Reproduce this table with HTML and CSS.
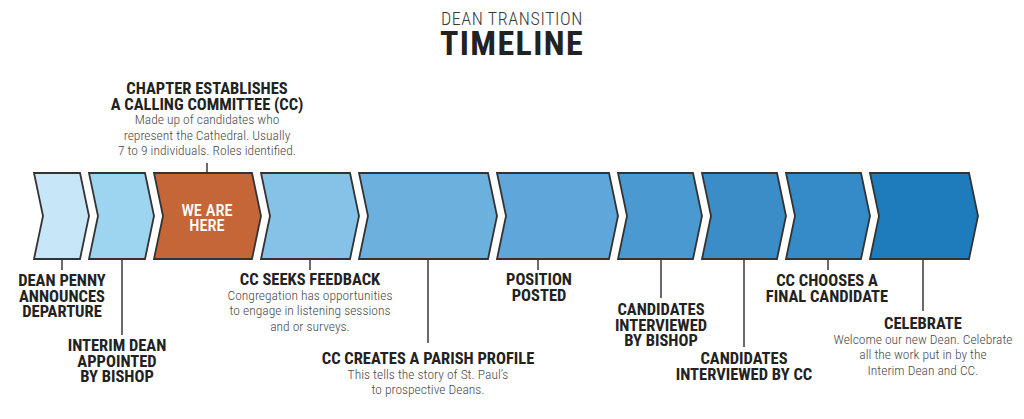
FILE: index.html
```html
<!DOCTYPE html>
<html lang="en">
<head>
<meta charset="utf-8">
<title>Dean Transition Timeline</title>
<link rel="stylesheet" href="styles.css">
</head>
<body>
<div class="page">
  <header class="header">
    <div class="kicker">DEAN TRANSITION</div>
    <h1 class="headline">TIMELINE</h1>
  </header>

  <svg class="canvas" width="1024" height="419" viewBox="0 0 1024 419" aria-hidden="true">
    <g class="links">
      <line x1="207" y1="163" x2="207" y2="174"/>
      <line x1="62" y1="258" x2="62" y2="270"/>
      <line x1="122" y1="258" x2="122" y2="335"/>
      <line x1="310" y1="258" x2="310" y2="270"/>
      <line x1="428" y1="258" x2="428" y2="343"/>
      <line x1="538" y1="258" x2="538" y2="270"/>
      <line x1="661" y1="258" x2="661" y2="298"/>
      <line x1="744" y1="258" x2="744" y2="347"/>
      <line x1="828" y1="258" x2="828" y2="270"/>
      <line x1="923" y1="258" x2="923" y2="311"/>
    </g>
    <g class="chevrons">
      <polygon fill="#c7e6f7" points="34,173 80,173 89,216 80,259 34,259 43,216"/>
      <polygon fill="#9dd4ef" points="89,173 145,173 154,216 145,259 89,259 98,216"/>
      <polygon fill="#c46638" points="154,173 252,173 261,216 252,259 154,259 163,216"/>
      <polygon fill="#86c2e8" points="261,173 350,173 359,216 350,259 261,259 270,216"/>
      <polygon fill="#6cb1de" points="359,173 488,173 497,216 488,259 359,259 368,216"/>
      <polygon fill="#5fa6da" points="497,173 609,173 618,216 609,259 497,259 506,216"/>
      <polygon fill="#4a99d0" points="618,173 693,173 702,216 693,259 618,259 627,216"/>
      <polygon fill="#3b8dc8" points="702,173 777,173 786,216 777,259 702,259 711,216"/>
      <polygon fill="#358bc7" points="786,173 861,173 870,216 861,259 786,259 795,216"/>
      <polygon fill="#1e7cbd" points="870,173 969,173 978,216 969,259 870,259 879,216"/>
    </g>
  </svg>

  <div class="node here"><span class="here-text">WE ARE<br>HERE</span></div>

  <div class="node n-chapter">
    <div class="title">CHAPTER ESTABLISHES<br>A CALLING COMMITTEE (CC)</div>
    <div class="desc">Made up of candidates who<br>represent the Cathedral. Usually<br>7 to 9 individuals. Roles identified.</div>
  </div>

  <div class="node n1"><div class="title">DEAN PENNY<br>ANNOUNCES<br>DEPARTURE</div></div>
  <div class="node n2"><div class="title">INTERIM DEAN<br>APPOINTED<br>BY BISHOP</div></div>
  <div class="node n3">
    <div class="title">CC SEEKS FEEDBACK</div>
    <div class="desc">Congregation has opportunities<br>to engage in listening sessions<br>and or surveys.</div>
  </div>
  <div class="node n4">
    <div class="title">CC CREATES A PARISH PROFILE</div>
    <div class="desc">This tells the story of St. Paul’s<br>to prospective Deans.</div>
  </div>
  <div class="node n5"><div class="title">POSITION<br>POSTED</div></div>
  <div class="node n6"><div class="title">CANDIDATES<br>INTERVIEWED<br>BY BISHOP</div></div>
  <div class="node n7"><div class="title">CANDIDATES<br>INTERVIEWED BY CC</div></div>
  <div class="node n8"><div class="title">CC CHOOSES A<br>FINAL CANDIDATE</div></div>
  <div class="node n9">
    <div class="title">CELEBRATE</div>
    <div class="desc">Welcome our new Dean. Celebrate<br>all the work put in by the<br>Interim Dean and CC.</div>
  </div>
</div>
</body>
</html>
```

FILE: styles.css
```css
* { box-sizing: border-box; }
html, body { margin: 0; padding: 0; background: #ffffff; }
body {
  font-family: "Roboto Condensed", "Roboto", sans-serif;
  color: #222222;
}
.page {
  position: relative;
  width: 1024px;
  height: 419px;
  overflow: hidden;
}
.header {
  display: flex;
  flex-direction: column;
  align-items: center;
  padding-top: 10px;
}
.kicker {
  font-size: 18px;
  line-height: 17px;
  font-weight: 300;
  letter-spacing: 0.6px;
  color: #3a3a3a;
}
.headline {
  margin: 0;
  font-size: 34px;
  line-height: 32px;
  font-weight: 700;
  letter-spacing: 1.4px;
  color: #222222;
}
.canvas {
  position: absolute;
  left: 0;
  top: 0;
}
.links line {
  stroke: #444444;
  stroke-width: 1.6;
}
.chevrons polygon {
  stroke: #333333;
  stroke-width: 1.8;
  stroke-linejoin: miter;
}
.node {
  position: absolute;
  transform: translateX(-50%);
  text-align: center;
  white-space: nowrap;
}
.title {
  font-size: 16.5px;
  line-height: 15.5px;
  font-weight: 700;
  color: #222222;
}
.desc {
  font-size: 13.5px;
  line-height: 15.5px;
  font-weight: 300;
  color: #4a4a4a;
}
.here { left: 207px; top: 203px; }
.here-text {
  display: block;
  font-size: 16.5px;
  line-height: 15px;
  font-weight: 500;
  color: #ffffff;
}
.n-chapter { left: 207px; top: 81px; }
.n1 { left: 62px; top: 273px; }
.n2 { left: 117px; top: 338px; }
.n3 { left: 310px; top: 272px; }
.n4 { left: 428px; top: 351px; }
.n5 { left: 539px; top: 272px; }
.n6 { left: 661px; top: 302px; }
.n7 { left: 744px; top: 351px; }
.n8 { left: 827px; top: 273px; }
.n9 { left: 923px; top: 316px; }
```
